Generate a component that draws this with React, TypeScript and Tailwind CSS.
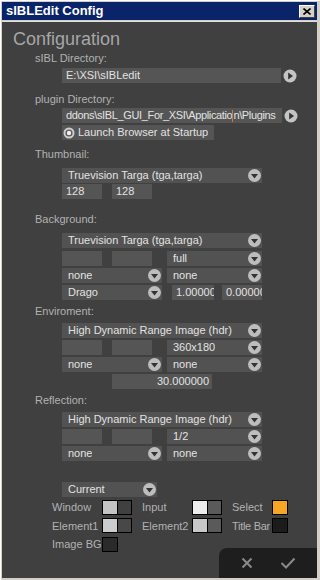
import React from "react";

const font = { fontFamily: '"Liberation Sans", Arial, sans-serif' };

function DropIcon() {
  return (
    <svg width="13" height="13" viewBox="0 0 13 13" className="shrink-0">
      <circle cx="6.5" cy="6.5" r="6.5" fill="#bdbdbd" />
      <polygon points="3,5 10,5 6.5,9.5" fill="#333" />
    </svg>
  );
}

function PlayIcon() {
  return (
    <svg width="14" height="14" viewBox="0 0 14 14" className="shrink-0">
      <circle cx="7" cy="7" r="6.5" fill="#c4c4c4" />
      <polygon points="5.2,3.5 5.2,10.5 10,7" fill="#333" />
    </svg>
  );
}

function Label({ children, className = "" }: { children: React.ReactNode; className?: string }) {
  return (
    <div className={"pl-[33px] h-[14px] leading-[14px] text-[11px] text-[#b2b2b2] " + className}>
      {children}
    </div>
  );
}

function Field({ value = "", className = "" }: { value?: string; className?: string }) {
  return (
    <div className={"h-[15px] bg-[#555555] text-[11px] leading-[15px] text-[#e2e2e2] pl-[4px] overflow-hidden whitespace-nowrap " + className}>
      {value}
    </div>
  );
}

function Drop({ value, className = "" }: { value: string; className?: string }) {
  return (
    <div className={"h-[15px] bg-[#525252] flex items-center justify-between pl-[6px] pr-[1px] text-[11px] text-[#e2e2e2] " + className}>
      <span className="whitespace-nowrap overflow-hidden">{value}</span>
      <DropIcon />
    </div>
  );
}

function Swatch({ a, b }: { a: string; b?: string }) {
  return (
    <div className="flex border border-black h-[15px] shrink-0">
      <div className="w-[14px] h-full" style={{ background: a }} />
      {b && <div className="w-[14px] h-full border-l border-black" style={{ background: b }} />}
    </div>
  );
}

function ColorItem({ label, a, b, w }: { label: string; a: string; b?: string; w: string }) {
  return (
    <div className="flex items-center whitespace-nowrap">
      <span className={"text-[11px] text-[#b2b2b2] shrink-0 " + w}>{label}</span>
      <Swatch a={a} b={b} />
    </div>
  );
}

export default function App() {
  return (
    <div style={font} className="w-[320px] h-[580px] bg-[#d4d0c8] border-t border-l border-white flex flex-col pl-[1px] pt-[1px] pr-[3px] pb-[2px]">
      <div className="h-[18px] bg-[#0a246a] flex items-center justify-between pl-[4px] pr-[2px]">
        <span className="text-white font-bold text-[13px]">sIBLEdit Config</span>
        <div className="w-[16px] h-[13px] bg-[#d4d0c8] border-t border-l border-white border-r border-b border-r-[#404040] border-b-[#404040] flex items-center justify-center">
          <svg width="8" height="7" viewBox="0 0 8 7">
            <path d="M0.5 0.5 L7.5 6.5 M7.5 0.5 L0.5 6.5" stroke="#000" strokeWidth="1.6" />
          </svg>
        </div>
      </div>
      <div className="flex-1 mt-[1px] bg-[#404040] border-t border-[#e0e0e0] flex flex-col relative">
        <div className="pl-[11px] mt-[5px] h-[24px] leading-[24px] text-[18px] text-[#a6a6a6]">Configuration</div>

        <Label>sIBL Directory:</Label>
        <div className="mt-[3px] pl-[60px] flex items-center gap-[2px]">
          <Field value="E:\XSI\sIBLedit" className="w-[219px]" />
          <PlayIcon />
        </div>

        <Label className="mt-[9px]">plugin Directory:</Label>
        <div className="mt-[2px] pl-[60px] flex items-center gap-[2px]">
          <div className="w-[220px] h-[15px] bg-[#555555] pl-[4px] overflow-hidden whitespace-nowrap text-[11px] leading-[15px] tracking-[-0.35px] text-[#e2e2e2]">
            ddons\sIBL_GUI_For_XSI\Applicatio<span className="inline-block w-[1px] h-[12px] bg-[#c08040] align-middle" />n\Plugins
          </div>
          <PlayIcon />
        </div>
        <div className="mt-[2px] ml-[60px] w-[152px] h-[15px] bg-[#555555] flex items-center gap-[3px] pl-[1px] text-[11px] text-[#e2e2e2]">
          <svg width="12" height="12" viewBox="0 0 12 12">
            <circle cx="6" cy="6" r="5.5" fill="#cfcfcf" />
            <circle cx="6" cy="6" r="3.6" fill="#5a5a5a" />
            <circle cx="6" cy="6" r="2.2" fill="#f0f0f0" />
          </svg>
          <span>Launch Browser at Startup</span>
        </div>

        <Label className="mt-[7px]">Thumbnail:</Label>
        <div className="mt-[7px] pl-[60px]">
          <Drop value="Truevision Targa (tga,targa)" className="w-[200px]" />
        </div>
        <div className="mt-[1px] pl-[60px] flex gap-[10px]">
          <Field value="128" className="w-[40px]" />
          <Field value="128" className="w-[40px]" />
        </div>

        <Label className="mt-[13px]">Background:</Label>
        <div className="mt-[7px] pl-[60px]">
          <Drop value="Truevision Targa (tga,targa)" className="w-[200px]" />
        </div>
        <div className="mt-[3px] pl-[60px] flex gap-[10px]">
          <Field className="w-[40px]" />
          <Field className="w-[40px]" />
          <Drop value="full" className="w-[95px] ml-[5px]" />
        </div>
        <div className="mt-[2px] pl-[60px] flex gap-[5px]">
          <Drop value="none" className="w-[100px]" />
          <Drop value="none" className="w-[95px]" />
        </div>
        <div className="mt-[2px] pl-[60px] flex">
          <Drop value="Drago" className="w-[100px]" />
          <Field value="1.00000" className="w-[42px] ml-[10px]" />
          <Field value="0.00000" className="w-[40px] ml-[8px]" />
        </div>

        <Label className="mt-[4px]">Enviroment:</Label>
        <div className="mt-[5px] pl-[60px]">
          <Drop value="High Dynamic Range Image (hdr)" className="w-[200px]" />
        </div>
        <div className="mt-[2px] pl-[60px] flex gap-[10px]">
          <Field className="w-[40px]" />
          <Field className="w-[40px]" />
          <Drop value="360x180" className="w-[95px] ml-[5px]" />
        </div>
        <div className="mt-[2px] pl-[60px] flex gap-[5px]">
          <Drop value="none" className="w-[100px]" />
          <Drop value="none" className="w-[95px]" />
        </div>
        <div className="mt-[2px] pl-[110px]">
          <Field value="30.000000" className="w-[100px] text-right pr-[3px]" />
        </div>

        <Label className="mt-[4px]">Reflection:</Label>
        <div className="mt-[5px] pl-[60px]">
          <Drop value="High Dynamic Range Image (hdr)" className="w-[200px]" />
        </div>
        <div className="mt-[2px] pl-[60px] flex gap-[10px]">
          <Field className="w-[40px]" />
          <Field className="w-[40px]" />
          <Drop value="1/2" className="w-[95px] ml-[5px]" />
        </div>
        <div className="mt-[2px] pl-[60px] flex gap-[5px]">
          <Drop value="none" className="w-[100px]" />
          <Drop value="none" className="w-[95px]" />
        </div>

        <div className="mt-[21px] pl-[60px]">
          <Drop value="Current" className="w-[95px]" />
        </div>
        <div className="mt-[2px] pl-[50px] grid grid-cols-[90px_90px_80px] gap-y-[2px]">
          <ColorItem label="Window" a="#c4c4c4" b="#404040" w="w-[50px]" />
          <ColorItem label="Input" a="#ececec" b="#5a5a5a" w="w-[50px]" />
          <ColorItem label="Select" a="#f5a623" w="w-[40px]" />
          <ColorItem label="Element1" a="#cccccc" b="#484848" w="w-[50px]" />
          <ColorItem label="Element2" a="#c8c8c8" b="#5a5a5a" w="w-[50px]" />
          <ColorItem label="Title Bar" a="#1c1c1c" w="min-w-[40px] pr-[1px] tracking-[-0.3px]" />
          <ColorItem label="Image BG" a="#2a2a2a" w="w-[50px]" />
        </div>

        <div className="absolute right-0 bottom-0 w-[98px] h-[30px] bg-[#1e1e1e] rounded-tl-[8px] flex items-center justify-around px-[8px]">
          <svg width="12" height="12" viewBox="0 0 12 12">
            <path d="M1.5 1.5 L10.5 10.5 M10.5 1.5 L1.5 10.5" stroke="#8a8a8a" strokeWidth="2" />
          </svg>
          <svg width="16" height="12" viewBox="0 0 16 12">
            <path d="M1.5 6 L6 10.5 L14.5 1.5" stroke="#8a8a8a" strokeWidth="2" fill="none" />
          </svg>
        </div>
      </div>
    </div>
  );
}
